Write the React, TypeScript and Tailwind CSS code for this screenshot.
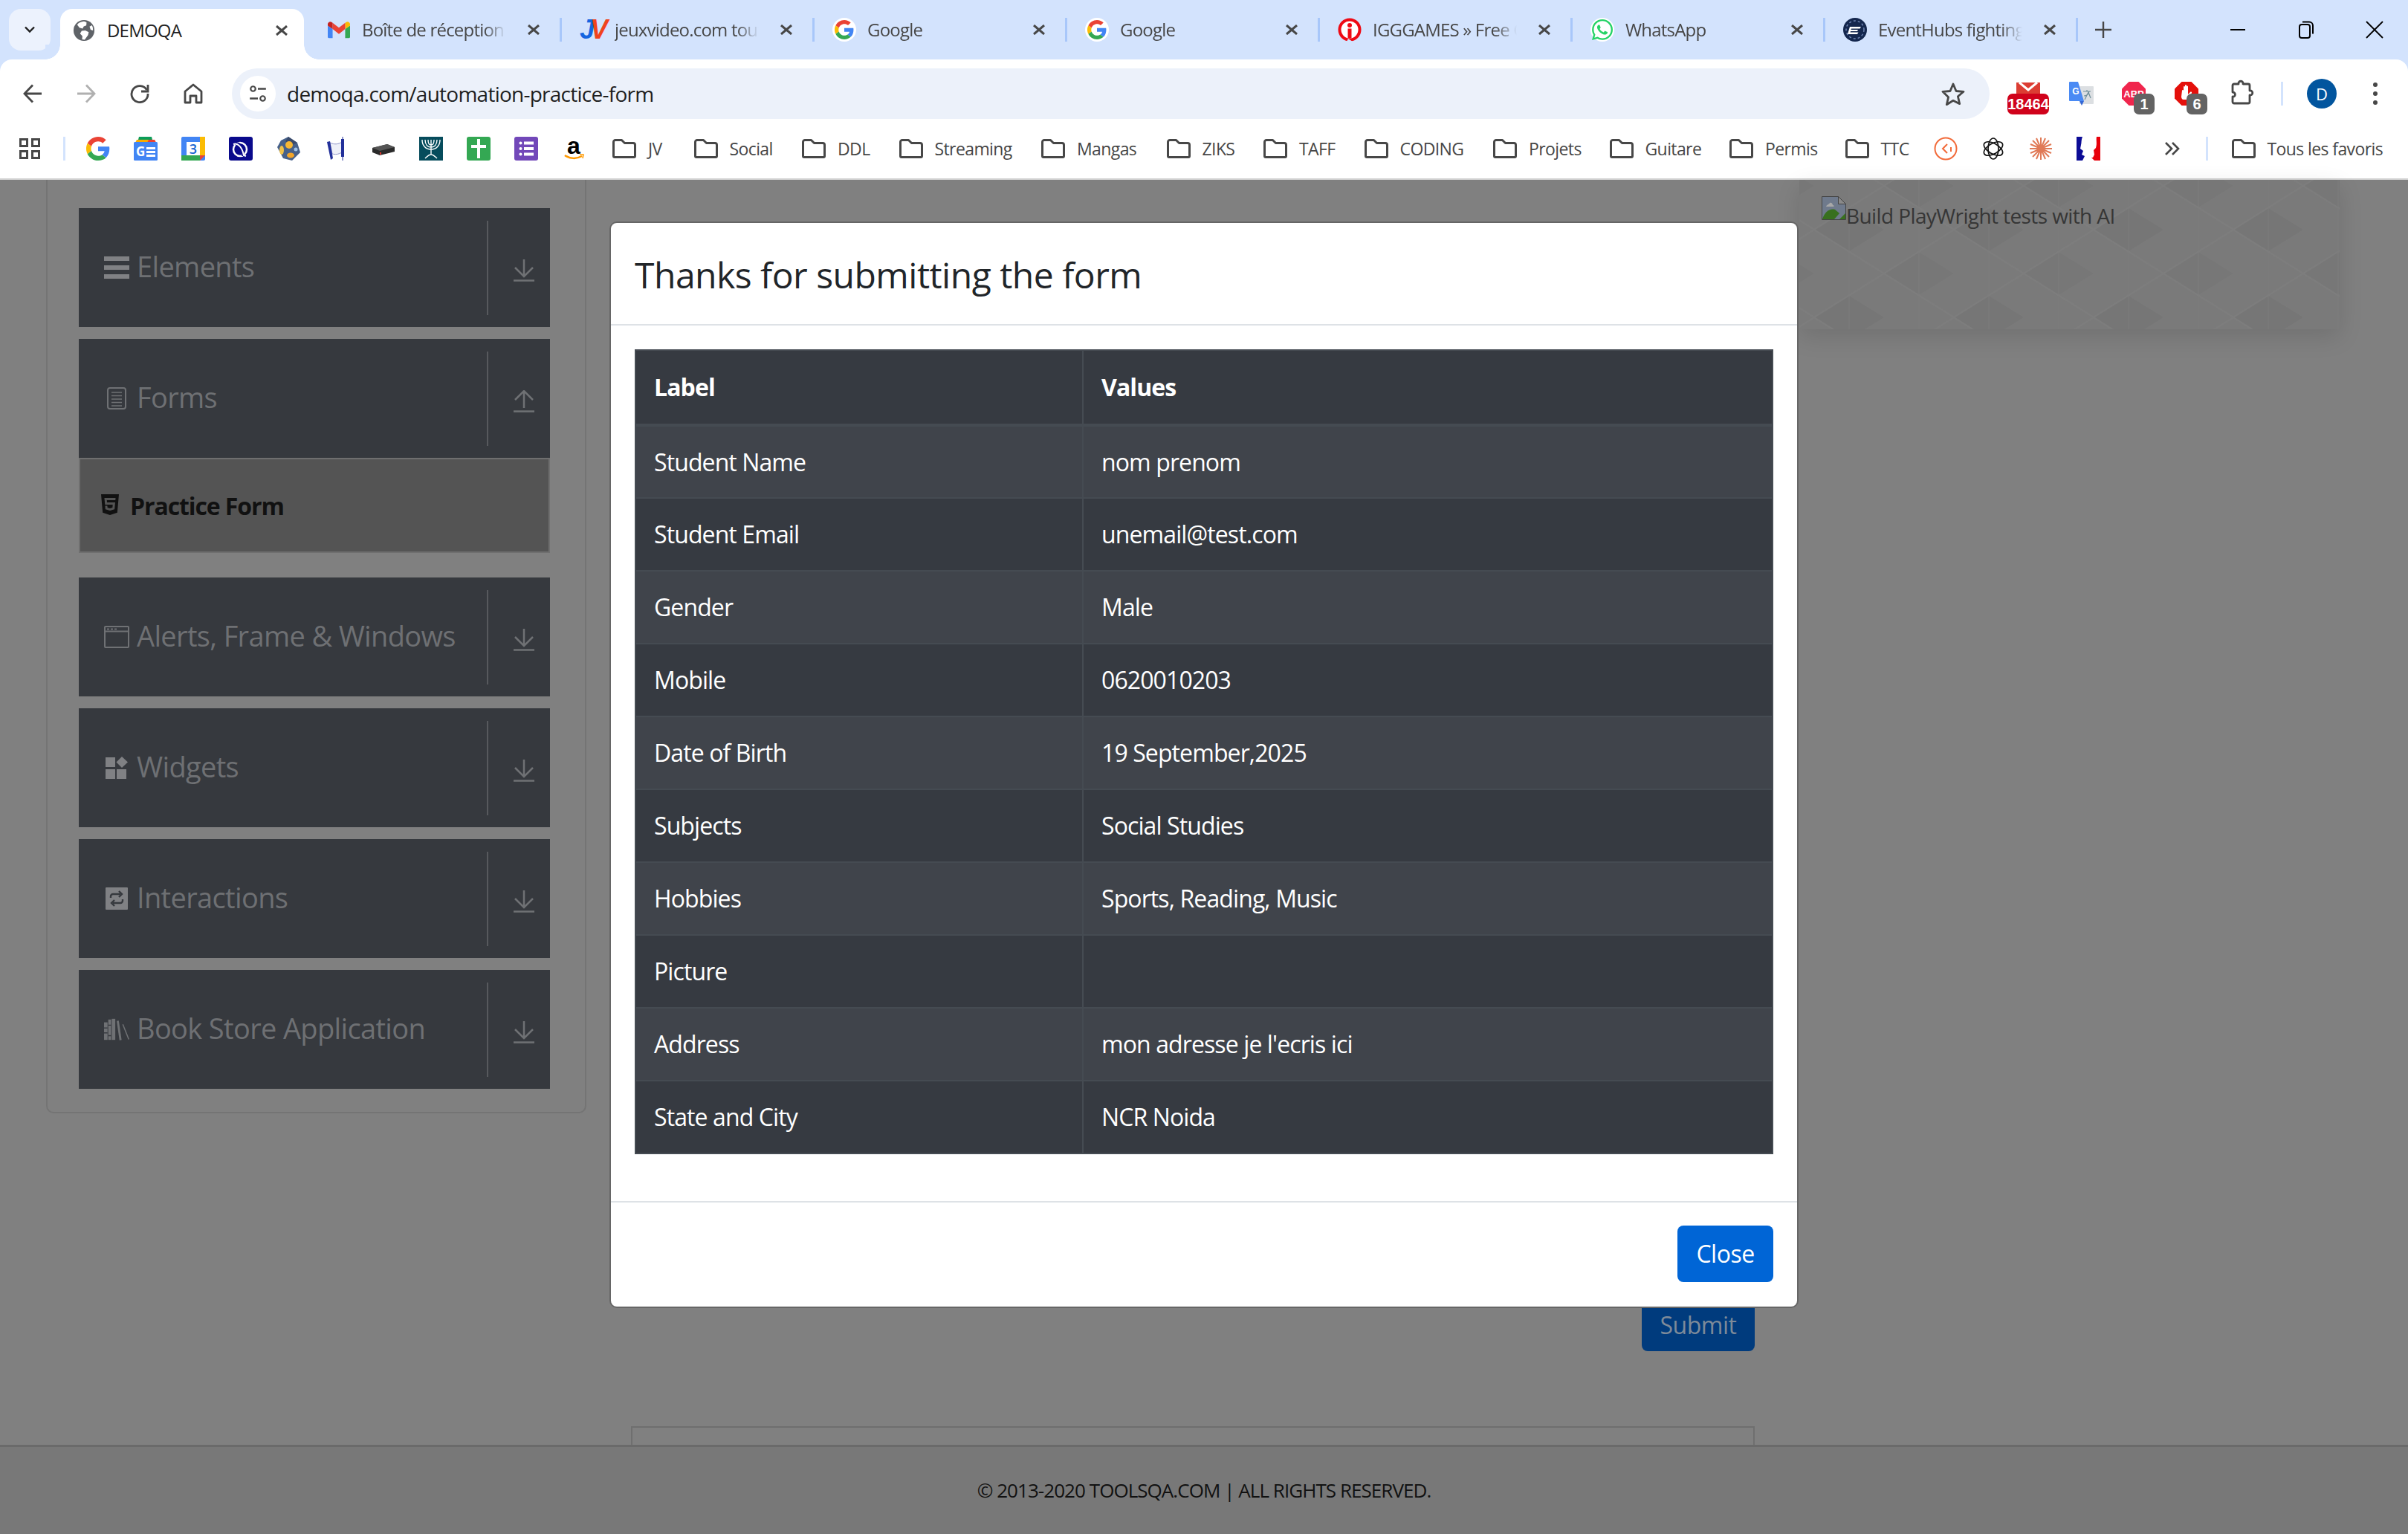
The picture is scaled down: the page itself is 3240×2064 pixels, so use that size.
import React from 'react';
import { FaHtml5, FaWhatsapp } from 'react-icons/fa';

type IconProps = { className?: string };

const tabs = [
  { title: 'Boîte de réception', icon: 'gmail' },
  { title: 'jeuxvideo.com tout', icon: 'jv' },
  { title: 'Google', icon: 'google' },
  { title: 'Google', icon: 'google' },
  { title: 'IGGGAMES » Free Games', icon: 'igg' },
  { title: 'WhatsApp', icon: 'whatsapp' },
  { title: 'EventHubs fighting', icon: 'eventhubs' },
];

const folders = [
  { name: 'JV', w: 'w-[24px]' },
  { name: 'Social', w: 'w-[60px]' },
  { name: 'DDL', w: 'w-[45px]' },
  { name: 'Streaming', w: 'w-[106px]' },
  { name: 'Mangas', w: 'w-[83px]' },
  { name: 'ZIKS', w: 'w-[45px]' },
  { name: 'TAFF', w: 'w-[50px]' },
  { name: 'CODING', w: 'w-[88px]' },
  { name: 'Projets', w: 'w-[71px]' },
  { name: 'Guitare', w: 'w-[76px]' },
  { name: 'Permis', w: 'w-[70px]' },
  { name: 'TTC', w: 'w-[37px]' },
];

const rows = [
  ['Student Name', 'nom prenom'],
  ['Student Email', 'unemail@test.com'],
  ['Gender', 'Male'],
  ['Mobile', '0620010203'],
  ['Date of Birth', '19 September,2025'],
  ['Subjects', 'Social Studies'],
  ['Hobbies', 'Sports, Reading, Music'],
  ['Picture', ''],
  ['Address', "mon adresse je l'ecris ici"],
  ['State and City', 'NCR Noida'],
];

const GoogleG = ({ className }: IconProps) => (
  <svg viewBox="0 0 48 48" className={className}>
    <path fill="#EA4335" d="M24 9.5c3.54 0 6.71 1.22 9.21 3.6l6.85-6.85C35.9 2.38 30.47 0 24 0 14.62 0 6.51 5.38 2.56 13.22l7.98 6.19C12.43 13.72 17.74 9.5 24 9.5z" />
    <path fill="#4285F4" d="M46.98 24.55c0-1.57-.15-3.09-.38-4.55H24v9.02h12.94c-.58 2.96-2.26 5.48-4.78 7.18l7.73 6c4.51-4.18 7.09-10.36 7.09-17.65z" />
    <path fill="#FBBC05" d="M10.53 28.59c-.48-1.45-.76-2.99-.76-4.59s.27-3.14.76-4.59l-7.98-6.19C.92 16.46 0 20.12 0 24c0 3.88.92 7.54 2.56 10.78l7.97-6.19z" />
    <path fill="#34A853" d="M24 48c6.48 0 11.93-2.13 15.89-5.81l-7.73-6c-2.15 1.45-4.92 2.3-8.16 2.3-6.26 0-11.57-4.22-13.47-9.91l-7.98 6.19C6.51 42.62 14.62 48 24 48z" />
  </svg>
);

const GlobeIcon = () => (
  <svg viewBox="0 0 32 32" className="h-[30px] w-[30px] shrink-0">
    <circle cx="16" cy="16" r="15" fill="#5f6368" />
    <path fill="#fff" d="M16 3c-4 .2-7.4 1.9-9.8 4.6l3.3 4.4 4.5 1.4 1.7-3.4 3.6-1.2.4-4.3A14 14 0 0 0 16 3zM18 16l-5.3.6-2.3 3.9 3.3 3.4-.4 4.9 3.700.4 4.800-6.600 1-4.200zM27.500 8.500l-3.500 2 1.500 4.500 3.500 1a13 13 0 0 0-1.500-7.500z" />
  </svg>
);

const GmailIcon = () => (
  <svg viewBox="0 0 32 24" className="h-[24px] w-[30px] shrink-0">
    <path fill="#4285f4" d="M2 24h5V11L0 6v16a2 2 0 0 0 2 2z" />
    <path fill="#34a853" d="M25 24h5a2 2 0 0 0 2-2V6l-7 5z" />
    <path fill="#fbbc04" d="M25 2v9l7-5V4c0-3-3.500-4.500-5.500-3z" />
    <path fill="#ea4335" d="M7 11V2l9 7 9-7v9l-9 7z" />
    <path fill="#c5221f" d="M0 4v2l7 5V2L5.500 1C3.500-.5 0 1 0 4z" />
  </svg>
);

const JvIcon = () => (
  <span className="flex w-[32px] shrink-0 font-['Liberation_Sans',sans-serif] text-[36px] font-bold italic leading-none tracking-[-6px]">
    <span className="text-[#1565e0]">J</span>
    <span className="text-[#f0431d]">V</span>
  </span>
);

const IggIcon = () => (
  <svg viewBox="0 0 32 32" className="h-[32px] w-[32px] shrink-0">
    <circle cx="16" cy="16" r="13.500" fill="#fff" stroke="#ee0a14" strokeWidth="4" />
    <circle cx="16" cy="10" r="3" fill="#ee0a14" />
    <rect x="13.500" y="14.500" width="5" height="13" fill="#ee0a14" />
    <path d="M14 28l6 4h-8z" fill="#d3e3fd" />
  </svg>
);

const WhatsappIcon = () => (
  <span className="relative flex h-[32px] w-[32px] shrink-0 items-center justify-center rounded-full bg-white">
    <FaWhatsapp className="h-[32px] w-[32px] text-[#25d366]" />
  </span>
);

const EventHubsIcon = () => (
  <svg viewBox="0 0 32 32" className="h-[32px] w-[32px] shrink-0">
    <circle cx="16" cy="16" r="16" fill="#14274e" />
    <circle cx="16" cy="16" r="12" fill="none" stroke="#6f86b3" strokeWidth="1.500" strokeDasharray="3 3" />
    <path d="M9 12h15l-1.500 2.500H11l-.5 1.500h9.500l-1 2H10l-.5 1.500h11l-1.500 2.500H6z" fill="#fff" />
  </svg>
);

const tabIcon = (name: string) => {
  if (name === 'gmail') return <GmailIcon />;
  if (name === 'jv') return <JvIcon />;
  if (name === 'igg') return <IggIcon />;
  if (name === 'whatsapp') return <WhatsappIcon />;
  if (name === 'eventhubs') return <EventHubsIcon />;
  return (
    <span className="flex h-[32px] w-[32px] shrink-0 items-center justify-center rounded-full bg-white">
      <GoogleG className="h-[26px] w-[26px]" />
    </span>
  );
};

const CloseX = () => (
  <svg viewBox="0 0 18 14" className="h-[14px] w-[18px]">
    <path d="M2 1l14 12M16 1L2 13" stroke="#474747" strokeWidth="3" fill="none" />
  </svg>
);

const FolderIcon = () => (
  <svg viewBox="0 0 32 26" className="h-[26px] w-[32px] shrink-0">
    <path d="M1.500 4A2.500 2.500 0 0 1 4 1.500h8.500l4 4H28A2.500 2.500 0 0 1 30.500 8v15a1.500 1.500 0 0 1-1.500 1.500H3A1.500 1.500 0 0 1 1.500 23z" fill="none" stroke="#474747" strokeWidth="3" strokeLinejoin="round" />
  </svg>
);

const NewsIcon = () => (
  <svg viewBox="0 0 32 32" className="h-[32px] w-[32px]">
    <path d="M6 4l1-4h17l1 4z" fill="#0c9d58" />
    <path d="M2 8l2-4h24l2 4z" fill="#f9ab00" />
    <path d="M18 8l2-4h8l2 4z" fill="#e94235" />
    <rect x="0" y="7" width="32" height="25" rx="1.500" fill="#4285f4" />
    <text x="3" y="26" fontSize="17" fontWeight="700" fill="#fff" fontFamily="'Open Sans',sans-serif">G</text>
    <rect x="17" y="14" width="12" height="3" fill="#fff" />
    <rect x="17" y="19" width="12" height="3" fill="#fff" />
    <rect x="17" y="24" width="12" height="3" fill="#fff" />
  </svg>
);

const CalendarIcon = () => (
  <svg viewBox="0 0 32 32" className="h-[32px] w-[32px]">
    <rect width="32" height="32" rx="2" fill="#4285f4" />
    <rect x="25" y="0" width="7" height="25" fill="#fbbc04" />
    <rect x="0" y="25" width="25" height="7" fill="#34a853" />
    <path d="M25 25h7l-7 7z" fill="#ea4335" />
    <rect x="7" y="7" width="18" height="18" fill="#fff" />
    <text x="16" y="23" textAnchor="middle" fontSize="18" fontWeight="600" fill="#1967d2" fontFamily="'Open Sans',sans-serif">3</text>
  </svg>
);

const RatpIcon = () => (
  <svg viewBox="0 0 32 32" className="h-[32px] w-[32px]">
    <rect width="32" height="32" rx="3" fill="#0a0a8c" />
    <circle cx="15" cy="17" r="9" fill="none" stroke="#fff" strokeWidth="2.500" />
    <path d="M8 10c6-3 11 3 11 16" fill="none" stroke="#0a0a8c" strokeWidth="3.500" />
    <path d="M6 10c6-2 12 4 14 15l3 1" fill="none" stroke="#fff" strokeWidth="2" />
  </svg>
);

const GemIcon = () => (
  <svg viewBox="0 0 32 32" className="h-[32px] w-[32px]">
    <path d="M16 0l12 8 4 13-11 11-12-3L1 14 6 5z" fill="#47618a" />
    <path d="M16 0l12 8-9 4-7-6z" fill="#3a4a6b" />
    <circle cx="17" cy="11" r="5" fill="#f7b733" />
    <ellipse cx="7" cy="18" rx="3" ry="6" fill="#f1c24a" />
    <ellipse cx="19" cy="25" rx="5" ry="3.500" fill="#f3a52a" />
    <circle cx="26" cy="17" r="2.500" fill="#9fc3e8" />
  </svg>
);

const ScrollIcon = () => (
  <svg viewBox="0 0 32 32" className="h-[32px] w-[32px]">
    <path d="M8 8c6 3 12 2 16-1v14c-5 3-9 3-13 2z" fill="#eef0f8" stroke="#8f94c9" strokeWidth="1" />
    <path d="M4 7l4-1 4 23-3 2z" fill="#22309a" />
    <rect x="23" y="3" width="4" height="24" fill="#22309a" />
    <path d="M25 0v32" stroke="#22309a" strokeWidth="1" />
  </svg>
);

const BoxIcon = () => (
  <svg viewBox="0 0 32 32" className="h-[32px] w-[32px]">
    <path d="M1 15l20-5 10 4v6L11 25 1 21z" fill="#2a2a2a" />
    <path d="M1 15l20-5 10 4-20 5z" fill="#555" />
    <rect x="11" y="21" width="2" height="3" fill="#d8342a" />
  </svg>
);

const MenorahIcon = () => (
  <svg viewBox="0 0 32 32" className="h-[32px] w-[32px]">
    <rect width="32" height="32" fill="#064c5c" />
    <path d="M4 4c0 8 5 13 12 13s12-5 12-13M8 4c0 6 3 10 8 10s8-4 8-10M12 4c0 4 1 7 4 7s4-3 4-7M16 4v20M8 29c3-3 5-5 8-5s5 2 8 5" fill="none" stroke="#fff" strokeWidth="1.400" />
  </svg>
);

const PlusSheetIcon = () => (
  <svg viewBox="0 0 32 32" className="h-[32px] w-[32px]">
    <rect width="32" height="32" rx="3" fill="#34a853" />
    <rect x="14" y="3" width="4" height="26" fill="#fff" />
    <rect x="6" y="11" width="20" height="4" fill="#fff" />
  </svg>
);

const FormsIcon = () => (
  <svg viewBox="0 0 32 32" className="h-[32px] w-[32px]">
    <rect width="32" height="32" rx="3" fill="#7248b9" />
    <g fill="#fff">
      <circle cx="8.500" cy="8.500" r="2" />
      <circle cx="8.500" cy="16" r="2" />
      <circle cx="8.500" cy="23.500" r="2" />
      <rect x="13" y="6.500" width="13" height="4" />
      <rect x="13" y="14" width="13" height="4" />
      <rect x="13" y="21.500" width="13" height="4" />
    </g>
  </svg>
);

const AmazonIcon = () => (
  <svg viewBox="0 0 32 32" className="h-[32px] w-[32px]">
    <text x="16" y="23" textAnchor="middle" fontSize="32" fontWeight="700" fill="#000" fontFamily="'Liberation Sans',sans-serif">a</text>
    <path d="M4 25c7 5 16 5 23 1" fill="none" stroke="#f90" strokeWidth="2.500" />
    <path d="M24 24l5 0-1 5" fill="none" stroke="#f90" strokeWidth="1.500" />
  </svg>
);

const OrangeCircleIcon = () => (
  <svg viewBox="0 0 32 32" className="h-[32px] w-[32px]">
    <circle cx="16" cy="16" r="14.500" fill="none" stroke="#f26b3a" strokeWidth="2" />
    <path d="M18 10l-6 6 6 6M23 14v6" fill="none" stroke="#f26b3a" strokeWidth="2" />
  </svg>
);

const ChatGptIcon = () => (
  <svg viewBox="0 0 32 32" className="h-[32px] w-[32px]">
    <g fill="none" stroke="#111" strokeWidth="1.700">
      <ellipse cx="16" cy="16" rx="7" ry="14" />
      <ellipse cx="16" cy="16" rx="7" ry="14" transform="rotate(60 16 16)" />
      <ellipse cx="16" cy="16" rx="7" ry="14" transform="rotate(120 16 16)" />
    </g>
  </svg>
);

const ClaudeIcon = () => (
  <svg viewBox="0 0 32 32" className="h-[32px] w-[32px]">
    <path
      d="M16 1v30M1 16h30M5 5l22 22M27 5L5 27M10 2l12 28M22 2L10 30M2 10l28 12M30 10L2 22"
      stroke="#e07a57"
      strokeWidth="2"
      fill="none"
    />
  </svg>
);

const FranceIcon = () => (
  <svg viewBox="0 0 32 32" className="h-[32px] w-[32px]">
    <path d="M0 0h8c-2 5-1 8-2 11l-1 5 4 3-2 5 4 2-3 6H0z" fill="#0c0c96" />
    <path d="M24 0h8v32h-8l-4-4 3-5-1-5 2-3c2-3 0-9 0-15z" fill="#e8000b" />
    <path d="M24 0h3c-1 5 1 9-1 15l-3 3 1 6-2 4-3 0 3-5-1-5 2-3c2-3 0-9 0-15z" fill="#fff" />
  </svg>
);

const GmailExt = () => (
  <div className="relative mt-[19px] h-[43px] w-[56px] shrink-0">
    <svg viewBox="0 0 32 18" className="absolute left-[12px] top-0 h-[18px] w-[32px]">
      <rect width="32" height="18" fill="#dc3d33" />
      <path d="M4 0l12 10L28 0" fill="none" stroke="#fff" strokeWidth="3" />
    </svg>
    <span className="absolute bottom-0 left-0 flex h-[28px] w-[56px] items-center justify-center overflow-hidden rounded-[7px] bg-[#d0021b] font-['Liberation_Sans',sans-serif] text-[20px] font-bold text-white">
      18464
    </span>
  </div>
);

const TranslateExt = () => (
  <svg viewBox="0 0 33 32" className="ml-[27px] mt-[18px] h-[32px] w-[33px] shrink-0">
    <rect x="14" y="6" width="19" height="24" rx="1" fill="#dcdfe2" />
    <path d="M19 13h10M24 11v2M21 24l5-10 3 8M20 19c3 0 6-2 7-6" fill="none" stroke="#6f8f9a" strokeWidth="1.200" />
    <path d="M0 1a1 1 0 0 1 1-1h11l8 26H1a1 1 0 0 1-1-1z" fill="#4a8af4" />
    <path d="M14 26h6l-3 6z" fill="#3367d6" />
    <text x="9" y="17" textAnchor="middle" fontSize="12" fontWeight="700" fill="#fff" fontFamily="'Liberation Sans',sans-serif">G</text>
  </svg>
);

const CountBadge = ({ count }: { count: string }) => (
  <span className="absolute bottom-0 right-0 flex h-[28px] w-[28px] items-center justify-center rounded-[7px] bg-[#636363] font-['Liberation_Sans',sans-serif] text-[20px] font-bold text-white">
    {count}
  </span>
);

const AbpExt = () => (
  <div className="relative ml-[38px] mt-[18px] h-[44px] w-[44px] shrink-0">
    <svg viewBox="0 0 32 32" className="absolute left-0 top-0 h-[32px] w-[32px]">
      <path d="M9.500 0h13L32 9.500v13L22.500 32h-13L0 22.500v-13z" fill="#f0264d" />
      <text x="16" y="21" textAnchor="middle" fontSize="13" fontWeight="700" fill="#fff" fontFamily="'Liberation Sans',sans-serif">ABP</text>
    </svg>
    <CountBadge count="1" />
  </div>
);

const StopExt = () => (
  <div className="relative ml-[27px] mt-[18px] h-[44px] w-[44px] shrink-0">
    <svg viewBox="0 0 32 32" className="absolute left-0 top-0 h-[32px] w-[32px]">
      <path d="M9.500 0h13L32 9.500v13L22.500 32h-13L0 22.500v-13z" fill="#e4100b" />
      <path d="M10 12a1 1 0 0 1 2 0v3V7a1 1 0 0 1 2 0v7V5a1 1 0 0 1 2 0v9V6.500a1 1 0 0 1 2 0V17l3-3c1-1 2.500 0 2 1l-5 9h-6c-2 0-3-2-3-4z" fill="#fff" />
    </svg>
    <CountBadge count="6" />
  </div>
);

const PuzzleIcon = () => (
  <svg viewBox="0 0 32 34" className="ml-[31px] mt-[15px] h-[34px] w-[32px] shrink-0">
    <path
      d="M3 8a2 2 0 0 1 2-2h6c-1-5 7-5 6 0h7a2 2 0 0 1 2 2v7c5-1 5 7 0 6v9a2 2 0 0 1-2 2H5a2 2 0 0 1-2-2v-7c4 1 5-6 0-6z"
      fill="none"
      stroke="#474747"
      strokeWidth="2.800"
      strokeLinejoin="round"
    />
  </svg>
);

const DownArrow = () => (
  <svg viewBox="0 0 30 30" className="h-[30px] w-[30px]">
    <path d="M15 0v23M3 11l12 12 12-12M1 28.500h28" fill="none" stroke="#6f7174" strokeWidth="2.500" />
  </svg>
);

const UpArrow = () => (
  <svg viewBox="0 0 30 30" className="h-[30px] w-[30px]">
    <path d="M15 24V1M3 13L15 1l12 12M1 28.500h28" fill="none" stroke="#6f7174" strokeWidth="2.500" />
  </svg>
);

const ElementsIcon = () => (
  <svg viewBox="0 0 34 30" className="h-[30px] w-[34px]">
    <g fill="#808184">
      <rect y="0" width="34" height="6" />
      <rect y="12" width="34" height="6" />
      <rect y="24" width="34" height="6" />
    </g>
  </svg>
);

const FormsDocIcon = () => (
  <svg viewBox="0 0 34 30" className="h-[30px] w-[34px]">
    <rect x="5" y="1" width="24" height="28" rx="3" fill="none" stroke="#6f7174" strokeWidth="2" />
    <path d="M10 7h14M10 11.500h14M10 16h14M10 20.500h14M10 25h14" stroke="#6f7174" strokeWidth="1.500" />
  </svg>
);

const WindowIcon = () => (
  <svg viewBox="0 0 34 30" className="h-[30px] w-[34px]">
    <rect x="1" y="1" width="32" height="28" rx="1" fill="none" stroke="#6f7174" strokeWidth="2" />
    <path d="M1 7.500h32" stroke="#6f7174" strokeWidth="2" />
    <path d="M4 4.500h3M9 4.500h3M14 4.500h3" stroke="#6f7174" strokeWidth="2" />
  </svg>
);

const WidgetsIcon = () => (
  <svg viewBox="0 0 34 30" className="h-[30px] w-[34px]">
    <g fill="#808184">
      <rect x="2" y="1" width="13" height="13" />
      <rect x="2" y="17" width="13" height="13" />
      <rect x="17" y="17" width="13" height="13" />
      <path d="M24 0l8 7.500-8 7.500-7.500-7.500z" />
    </g>
  </svg>
);

const InteractionsIcon = () => (
  <svg viewBox="0 0 34 30" className="h-[30px] w-[34px]">
    <rect x="2" y="0" width="30" height="30" rx="1" fill="#808184" />
    <path d="M9 14v-2a3 3 0 0 1 3-3h10M20 5l4 4-4 4M25 16v2a3 3 0 0 1-3 3H12M14 17l-4 4 4 4" fill="none" stroke="#36393e" strokeWidth="2.400" />
  </svg>
);

const BooksIcon = () => (
  <svg viewBox="0 0 36 30" className="h-[30px] w-[36px]">
    <g fill="#6f7174">
      <rect x="0" y="5" width="5" height="25" />
      <rect x="6" y="1" width="4" height="29" />
      <rect x="11" y="0" width="5" height="30" />
      <path d="M18 3l3-.5 4 27.500-3 .5z" />
      <path d="M26 8l1.500-.5L36 29l-1.500.5z" />
    </g>
    <path d="M0 13h5M0 20h5M6 9h4M6 24h4" stroke="#36393e" strokeWidth="1.500" />
  </svg>
);

const sidebarTop = [
  { label: 'Elements', icon: <ElementsIcon />, open: false },
  { label: 'Forms', icon: <FormsDocIcon />, open: true },
];

const sidebarBottom = [
  { label: 'Alerts, Frame & Windows', icon: <WindowIcon />, open: false },
  { label: 'Widgets', icon: <WidgetsIcon />, open: false },
  { label: 'Interactions', icon: <InteractionsIcon />, open: false },
  { label: 'Book Store Application', icon: <BooksIcon />, open: false },
];

const SidebarCard = ({ label, icon, open }: { label: string; icon: React.ReactNode; open: boolean }) => (
  <div className="flex h-[160px] items-center bg-[#36393e] pl-[34px]">
    <span className="flex w-[34px] shrink-0 items-center justify-center">{icon}</span>
    <span className="ml-[10px] -mt-[5px] whitespace-nowrap text-[38px] leading-none tracking-[-0.65px] text-[#6e7073]">{label}</span>
    <span className="ml-auto h-[127px] w-[2px] bg-[#57595d]" />
    <span className="ml-[33px] mr-[20px] mt-[8px] flex">{open ? <UpArrow /> : <DownArrow />}</span>
  </div>
);

const TabStrip = () => (
  <div className="flex h-[80px] shrink-0 items-start bg-[#d3e3fd] pl-[12px] pt-[12px]">
    <div className="flex h-[56px] w-[56px] items-center justify-center rounded-[16px] bg-[#ecf2fd]">
      <svg viewBox="0 0 14 10" className="h-[10px] w-[14px]">
        <path d="M1 1.500l6 6 6-6" fill="none" stroke="#1f1f1f" strokeWidth="2.400" />
      </svg>
    </div>
    <div className="ml-[8px] flex">
      {/* active tab */}
      <div className="relative ml-[5px] mr-[7px] flex h-[68px] w-[328px] items-center rounded-t-[16px] bg-white pb-[10px] pl-[17px]">
        <span className="absolute bottom-0 -left-[20px] h-[20px] w-[20px] bg-[radial-gradient(circle_at_0_0,#d3e3fd_19.5px,#fff_20px)]" />
        <span className="absolute bottom-0 -right-[20px] h-[20px] w-[20px] bg-[radial-gradient(circle_at_100%_0,#d3e3fd_19.5px,#fff_20px)]" />
        <GlobeIcon />
        <span className="ml-[16px] w-[192px] text-[24px] tracking-[-0.8px] text-[#1f1f1f]">DEMOQA</span>
        <span className="ml-[34px]"><CloseX /></span>
      </div>
      {tabs.map((tab, i) => (
        <div key={i} className="flex h-[56px] w-[340px] items-center pl-[24px]">
          <span className="flex w-[32px] shrink-0 justify-center">{tabIcon(tab.icon)}</span>
          <span className="ml-[15px] w-[194px] overflow-hidden whitespace-nowrap text-[24px] tracking-[-0.8px] text-[#474747] [mask-image:linear-gradient(to_right,black_85%,transparent)]">
            {tab.title}
          </span>
          <span className="ml-[28px]"><CloseX /></span>
          <span className="ml-auto h-[32px] w-[3px] bg-[#a8c7fa]" />
        </div>
      ))}
    </div>
    <svg viewBox="0 0 22 22" className="ml-[23px] mt-[17px] h-[22px] w-[22px]">
      <path d="M11 0v22M0 11h22" stroke="#474747" strokeWidth="2.400" />
    </svg>
    <div className="ml-auto -mt-[12px] flex h-[80px]">
      <div className="flex h-[80px] w-[92px] items-center justify-center">
        <span className="h-[2px] w-[20px] bg-black" />
      </div>
      <div className="flex h-[80px] w-[92px] items-center justify-center">
        <svg viewBox="0 0 22 24" className="h-[24px] w-[22px]">
          <rect x="2" y="5" width="14" height="18" rx="3" fill="none" stroke="#000" strokeWidth="2" />
          <path d="M6 1.500h9a5 5 0 0 1 5 5v11" fill="none" stroke="#000" strokeWidth="2" />
        </svg>
      </div>
      <div className="flex h-[80px] w-[91px] items-center justify-center">
        <svg viewBox="0 0 24 24" className="h-[24px] w-[24px]">
          <path d="M1 1l22 22M23 1L1 23" stroke="#000" strokeWidth="1.800" />
        </svg>
      </div>
    </div>
  </div>
);

const Toolbar = () => (
  <div className="flex h-[80px] shrink-0 items-start rounded-t-[16px] bg-white pl-[8px] pt-[12px]">
    <div className="flex h-[68px] w-[72px] items-center justify-center">
      <svg viewBox="0 0 26 26" className="h-[26px] w-[26px]">
        <path d="M25 13H2M13 1.500L2 13l11 11.500" fill="none" stroke="#474747" strokeWidth="2.800" />
      </svg>
    </div>
    <div className="flex h-[68px] w-[72px] items-center justify-center">
      <svg viewBox="0 0 26 26" className="h-[26px] w-[26px]">
        <path d="M1 13h23M13 1.500L24 13 13 24.500" fill="none" stroke="#b0b0b0" strokeWidth="2.800" />
      </svg>
    </div>
    <div className="flex h-[68px] w-[72px] items-center justify-center">
      <svg viewBox="0 0 26 26" className="h-[26px] w-[26px]">
        <path d="M22.500 8A11 11 0 1 0 24 13" fill="none" stroke="#474747" strokeWidth="2.800" />
        <path d="M24 1v9h-9" fill="none" stroke="#474747" strokeWidth="2.800" />
      </svg>
    </div>
    <div className="flex h-[68px] w-[72px] items-center justify-center">
      <svg viewBox="0 0 26 28" className="h-[28px] w-[26px]">
        <path d="M2 11L13 2l11 9v15h-7v-9H9v9H2z" fill="none" stroke="#474747" strokeWidth="2.800" strokeLinejoin="round" />
      </svg>
    </div>
    <div className="ml-[16px] flex h-[68px] flex-1 items-center rounded-full bg-[#ecf1fa] pl-[11px] pr-[33px]">
      <span className="flex h-[48px] w-[48px] items-center justify-center rounded-full bg-white">
        <svg viewBox="0 0 24 24" className="h-[26px] w-[26px]">
          <circle cx="6" cy="6" r="3" fill="none" stroke="#474747" strokeWidth="2" />
          <path d="M12 6h10M2 18h10" stroke="#474747" strokeWidth="2.400" />
          <circle cx="18" cy="18" r="3" fill="none" stroke="#474747" strokeWidth="2" />
        </svg>
      </span>
      <span className="ml-[15px] text-[28px] tracking-[-0.75px] text-[#1f1f1f]">demoqa.com/automation-practice-form</span>
      <svg viewBox="0 0 32 32" className="ml-auto h-[32px] w-[32px]">
        <path d="M16 3l4 9.500 10 .8-7.600 6.500 2.300 9.900L16 25.300l-8.700 5.400 2.300-9.900L2 13.300l10-.8z" fill="none" stroke="#474747" strokeWidth="2.800" strokeLinejoin="round" />
      </svg>
    </div>
    <div className="flex h-[68px] w-[563px] shrink-0 items-start pl-[24px]">
      <GmailExt />
      <TranslateExt />
      <AbpExt />
      <StopExt />
      <PuzzleIcon />
      <span className="ml-[36px] mt-[18px] h-[32px] w-[3px] bg-[#d3e3fd]" />
      <span className="ml-[32px] mt-[14px] flex h-[40px] w-[40px] items-center justify-center rounded-full bg-[#02559e] text-[22px] text-white">
        D
      </span>
      <div className="ml-[49px] mt-[18px] flex h-[32px] flex-col items-center justify-between py-[1px]">
        <span className="h-[6px] w-[6px] rounded-full bg-[#474747]" />
        <span className="h-[6px] w-[6px] rounded-full bg-[#474747]" />
        <span className="h-[6px] w-[6px] rounded-full bg-[#474747]" />
      </div>
    </div>
  </div>
);

const BookmarkFolder = ({ name, w }: { name: string; w: string }) => (
  <div className="flex items-center gap-[16px]">
    <FolderIcon />
    <span className={`${w} whitespace-nowrap text-[23px] tracking-[-0.6px] text-[#474747]`}>{name}</span>
  </div>
);

const BookmarksBar = () => (
  <div className="flex h-[82px] shrink-0 items-center border-b-2 border-[#d0d0d0] bg-white pl-[26px]">
    <svg viewBox="0 0 28 28" className="h-[28px] w-[28px]">
      <g fill="none" stroke="#474747" strokeWidth="3">
        <rect x="1.500" y="1.500" width="9" height="9" />
        <rect x="17.500" y="1.500" width="9" height="9" />
        <rect x="1.500" y="17.500" width="9" height="9" />
        <rect x="17.500" y="17.500" width="9" height="9" />
      </g>
    </svg>
    <span className="ml-[31px] h-[32px] w-[3px] bg-[#d3e3fd]" />
    <div className="ml-[28px] flex items-center gap-[32px]">
      <GoogleG className="h-[32px] w-[32px]" />
      <NewsIcon />
      <CalendarIcon />
      <RatpIcon />
      <GemIcon />
      <ScrollIcon />
      <BoxIcon />
      <MenorahIcon />
      <PlusSheetIcon />
      <FormsIcon />
      <AmazonIcon />
    </div>
    <div className="ml-[36px] flex items-center gap-[37.500px]">
      {folders.map((f) => (
        <BookmarkFolder key={f.name} name={f.name} w={f.w} />
      ))}
    </div>
    <div className="ml-[34px] flex items-center gap-[32px]">
      <OrangeCircleIcon />
      <ChatGptIcon />
      <ClaudeIcon />
      <FranceIcon />
    </div>
    <svg viewBox="0 0 21 18" className="ml-[86px] h-[18px] w-[21px]">
      <path d="M2 1l8 8-8 8M11 1l8 8-8 8" fill="none" stroke="#474747" strokeWidth="2.600" />
    </svg>
    <span className="ml-[35px] h-[32px] w-[3px] bg-[#d3e3fd]" />
    <div className="ml-[32px]">
      <BookmarkFolder name="Tous les favoris" w="w-[160px]" />
    </div>
  </div>
);

const Sidebar = () => (
  <div className="ml-[62px] h-[1256px] w-[727px] shrink-0 rounded-b-[10px] border-2 border-t-0 border-[#747474] pl-[42px] pt-[38px]">
    <div className="flex w-[634px] flex-col gap-[16px]">
      {sidebarTop.map((item) => (
        <SidebarCard key={item.label} {...item} />
      ))}
    </div>
    <div className="w-[634px] border-2 border-[#6f6f6f] bg-[#545454] py-[44px] pl-[28px]">
      <div className="flex h-[36px] items-center text-[32px] font-bold leading-[36px] tracking-[-1.1px] text-[#111]">
        <FaHtml5 className="-mt-[2px] h-[32px] w-[24px]" />
        <span className="ml-[15px] mt-[2px]">Practice Form</span>
      </div>
    </div>
    <div className="mt-[33px] flex w-[634px] flex-col gap-[16px]">
      {sidebarBottom.map((item) => (
        <SidebarCard key={item.label} {...item} />
      ))}
    </div>
  </div>
);

const AdBanner = () => (
  <div className="relative ml-[60px] h-[201px] w-[727px] shrink-0 overflow-hidden bg-[#7a7a7a] pl-[30px] pt-[22px] shadow-[0_10px_30px_rgba(0,0,0,0.12)]">
    <svg className="absolute inset-0 h-full w-full">
      <defs>
        <pattern id="adDiamonds" width="188" height="118" patternUnits="userSpaceOnUse" patternTransform="translate(20 8)">
          <path d="M0 59l47-29 47 29-47 29z" fill="#767676" />
          <path d="M94 0l47 29 47-29M94 118l47-29 47 29" fill="#777777" />
          <path d="M0 59L94 0l94 59-94 59z" fill="none" stroke="#7d7d7d" strokeWidth="2" />
          <path d="M47 0v118M141 0v118" stroke="#7c7c7c" strokeWidth="1" />
        </pattern>
      </defs>
      <rect width="100%" height="100%" fill="url(#adDiamonds)" />
    </svg>
    <div className="relative flex items-start text-[28px] leading-[40px] tracking-[-0.6px] text-[#363636]">
      <svg viewBox="0 0 33 32" className="h-[32px] w-[33px] shrink-0">
        <path d="M.5.5h22l10 10v21H.5z" fill="#6f7a8c" stroke="#444" strokeWidth="1" />
        <path d="M22.500.5v10h10z" fill="#8a8a8a" stroke="#444" strokeWidth="1" />
        <path d="M1 31c3-10 10-15 17-13l6 5-7 8z" fill="#38701f" />
        <path d="M24 31l8-8v8z" fill="#38701f" />
        <path d="M6 14c1-3 4-3 5-5 2-1 4 1 4 3 2 0 2 2 1 2z" fill="#a8a8a8" />
      </svg>
      <span className="mt-[6px]">Build PlayWright tests with AI</span>
    </div>
  </div>
);

const ResultModal = () => (
  <div className="absolute left-[820px] top-[56px] flex h-[1462px] w-[1600px] flex-col rounded-[10px] border-2 border-[#666] bg-white">
    <div className="flex h-[138px] shrink-0 items-center border-b-2 border-[#dee2e6] px-[32px]">
      <div className="mt-[4px] text-[48px] leading-[72px] tracking-[-0.5px] text-[#212529]">Thanks for submitting the form</div>
    </div>
    <div className="px-[32px] pb-[63px] pt-[32px]">
      <table className="w-[1532px] table-fixed border-collapse bg-[#363a41] text-[32px] tracking-[-0.9px] text-white">
        <thead>
          <tr className="h-[101px]">
            <th className="w-[602px] border-2 border-b-4 border-[#454b52] px-[24px] text-left font-bold">Label</th>
            <th className="border-2 border-b-4 border-[#454b52] px-[24px] text-left font-bold">Values</th>
          </tr>
        </thead>
        <tbody>
          {rows.map(([label, value], i) => (
            <tr key={label} className={i % 2 === 0 ? 'h-[98px] bg-[#40444b]' : 'h-[98px]'}>
              <td className="border-2 border-[#454b52] px-[24px]">{label}</td>
              <td className="border-2 border-[#454b52] px-[24px]">{value}</td>
            </tr>
          ))}
        </tbody>
      </table>
    </div>
    <div className="flex flex-1 justify-end border-t-2 border-[#dee2e6] pr-[32px] pt-[31px]">
      <button className="h-[76px] w-[129px] rounded-[8px] bg-[#0065d6] text-[32px] tracking-[-0.5px] text-white">Close</button>
    </div>
  </div>
);

const App: React.FC = () => {
  return (
    <div className="flex h-[2064px] w-[3240px] flex-col overflow-hidden bg-[#d3e3fd] font-['Open_Sans',sans-serif]">
      <TabStrip />
      <Toolbar />
      <BookmarksBar />
      <div className="relative flex flex-1 flex-col bg-[#808080]">
        <main className="flex h-[1702px] shrink-0 items-start">
          <Sidebar />
          <div className="ml-[60px] flex h-[1702px] w-[1512px] shrink-0 flex-col items-end pt-[1501px]">
            <button className="h-[76px] w-[152px] rounded-[8px] bg-[#003b7d] pt-[5px] text-[32px] tracking-[-0.5px] text-[#7d8a99]">Submit</button>
            <div className="mt-[101px] h-[25px] w-full border-2 border-b-0 border-[#6f6f6f]" />
          </div>
          <AdBanner />
        </main>
        <footer className="flex flex-1 items-center justify-center border-t-[3px] border-[#6a6a6a] bg-[#787878] text-[26px] tracking-[-0.95px] text-[#111]">
          © 2013-2020 TOOLSQA.COM | ALL RIGHTS RESERVED.
        </footer>
        <ResultModal />
      </div>
    </div>
  );
};

export default App;
